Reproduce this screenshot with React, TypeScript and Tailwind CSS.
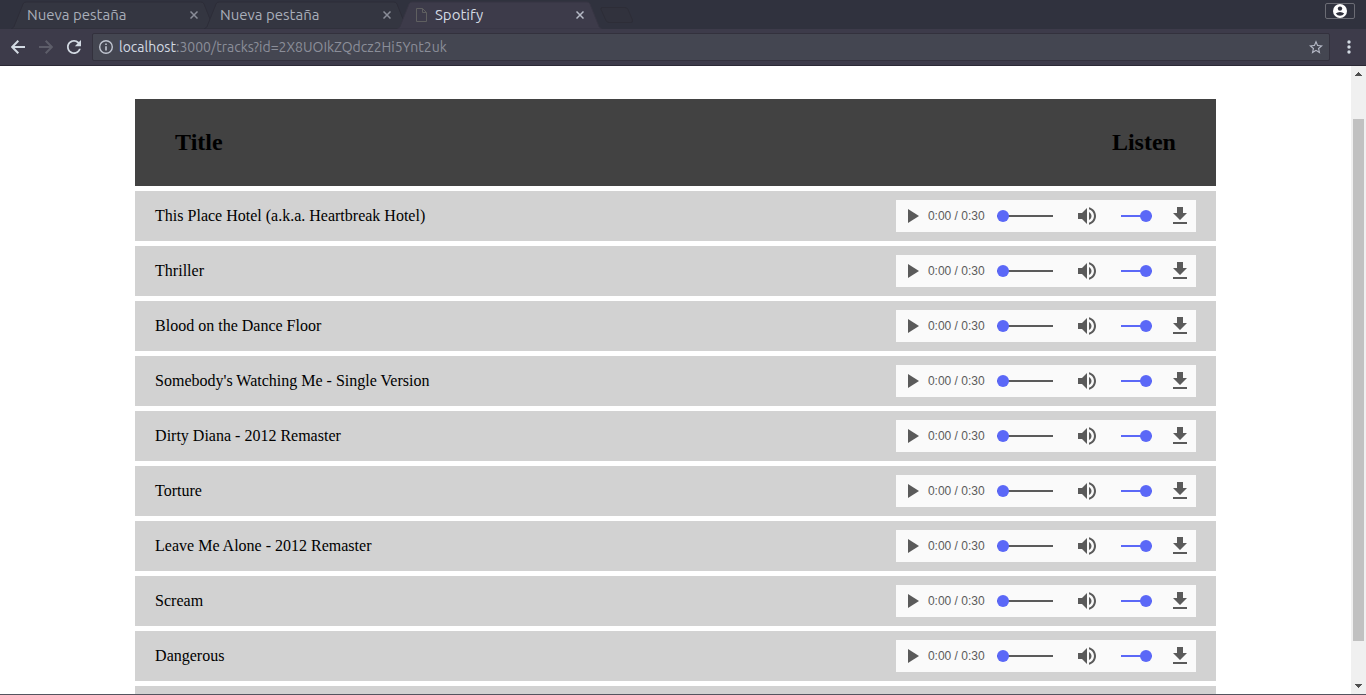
import { ReactNode } from "react";

const tracks = [
  "This Place Hotel (a.k.a. Heartbreak Hotel)",
  "Thriller",
  "Blood on the Dance Floor",
  "Somebody's Watching Me - Single Version",
  "Dirty Diana - 2012 Remaster",
  "Torture",
  "Leave Me Alone - 2012 Remaster",
  "Scream",
  "Dangerous",
];

function Tab({ title, active = false, icon }: { title: string; active?: boolean; icon?: ReactNode }) {
  return (
    <div className={active ? "relative z-10 -mr-3 h-7 w-[205px]" : "relative -mr-3 h-7 w-[205px]"}>
      <svg className="absolute inset-0 h-full w-full" viewBox="0 0 205 28" preserveAspectRatio="none" aria-hidden="true">
        <path
          d="M0.5 28 L3 25.5 L12 3 Q13 1 15 1 H190 Q192 1 193 3 L202 25.5 L204.5 28 Z"
          fill={active ? "#3d3b4a" : "#343641"}
          stroke={active ? "#373543" : "#2d2d38"}
        />
      </svg>
      <div className="relative flex h-full items-center pr-3.5 pl-4">
        {icon}
        <span className={active ? "flex-1 text-[#d3dae3]" : "flex-1 text-[#a9aeb9]"}>{title}</span>
        <button aria-label={`Cerrar ${title}`} className="flex size-4 items-center justify-center">
          <svg width="8" height="8" viewBox="0 0 8 8" stroke={active ? "#b6bac6" : "#8a8d98"} strokeWidth="1.5" aria-hidden="true">
            <path d="M0.5 0.5 7.5 7.5M7.5 0.5 0.5 7.5" />
          </svg>
        </button>
      </div>
    </div>
  );
}

function BrowserChrome() {
  return (
    <header className="shrink-0 font-['Ubuntu','Noto_Sans',sans-serif] text-sm">
      <div className="flex h-[29px] items-end justify-between bg-[#30323e] pr-[11px] text-[15px]">
        <div className="flex pl-[11px]">
          <Tab title="Nueva pestaña" />
          <Tab title="Nueva pestaña" />
          <Tab
            title="Spotify"
            active
            icon={
              <svg className="mr-2 ml-[3px]" width="11" height="14" viewBox="0 0 11 14" fill="none" stroke="#5f5f60" aria-hidden="true">
                <path d="M0.5 0.5H6.5L10.5 4.5V13.5H0.5ZM6.5 0.5V4.5H10.5" />
              </svg>
            }
          />
          <button aria-label="Nueva pestaña" className="ml-2.5 flex items-center">
            <svg width="34" height="16" viewBox="0 0 34 16" aria-hidden="true">
              <path d="M2 0.5H25Q27 0.5 28 2.5L32.5 13Q33 15.5 31 15.5H9Q7 15.5 6 13.5L1 2.5Q0.5 0.5 2 0.5Z" fill="#31323d" stroke="#2d2d37" />
            </svg>
          </button>
        </div>
        <button aria-label="Perfil" className="mb-2.5 flex h-4 w-[30px] items-center justify-center rounded-xs border border-[#6b6c74]">
          <svg width="14" height="14" viewBox="0 0 14 14" aria-hidden="true">
            <circle cx="7" cy="7" r="7" fill="#fff" />
            <circle cx="7" cy="4.6" r="2.2" fill="#30323e" />
            <path d="M2.8 9.6Q4.5 7.9 7 7.9T11.2 9.6Q9.6 11.8 7 11.8T2.8 9.6Z" fill="#30323e" />
          </svg>
        </button>
      </div>
      <div className="flex h-[37px] items-center border-b border-[#2b2935] bg-[#3d3b4a] pr-3.5 pl-1.5">
        <button aria-label="Atrás" className="flex size-6 items-center justify-center">
          <svg width="14" height="14" viewBox="0 0 14 14" fill="none" stroke="#d3dae3" strokeWidth="2" aria-hidden="true">
            <path d="M14 7H1.5M7.3 0.8 1.2 7 7.3 13.2" />
          </svg>
        </button>
        <button aria-label="Adelante" className="ml-1 flex size-6 items-center justify-center">
          <svg width="14" height="14" viewBox="0 0 14 14" fill="none" stroke="#5d5d69" strokeWidth="2" aria-hidden="true">
            <path d="M0 7H12.5M6.7 0.8 12.8 7 6.7 13.2" />
          </svg>
        </button>
        <button aria-label="Recargar" className="ml-1 flex size-6 items-center justify-center">
          <svg width="14" height="14" viewBox="4 4 16 16" fill="#d3dae3" aria-hidden="true">
            <path d="M17.65 6.35C16.2 4.9 14.21 4 12 4c-4.42 0-7.99 3.58-7.99 8s3.57 8 7.99 8c3.73 0 6.84-2.55 7.73-6h-2.08c-.82 2.33-3.04 4-5.65 4-3.31 0-6-2.69-6-6s2.69-6 6-6c1.66 0 3.14.69 4.22 1.78L13 11h7V4l-2.35 2.35z" />
          </svg>
        </button>
        <div className="ml-1.5 flex h-7 flex-1 items-center rounded-xs border border-[#33313d] bg-[#444651] pr-1.5 pl-1.5">
          <svg className="mr-1.5" width="14" height="14" viewBox="0 0 14 14" fill="none" stroke="#c0c5d0" aria-hidden="true">
            <circle cx="7" cy="7" r="6.3" strokeWidth="1.4" />
            <path d="M7 6.2V10.5M7 3.5V5" strokeWidth="1.6" />
          </svg>
          <a href="/tracks?id=2X8UOIkZQdcz2Hi5Ynt2uk" className="flex-1 text-[#8b8e99]">
            <span className="text-[#d3dae3]">localhost</span>:3000/tracks?id=2X8UOIkZQdcz2Hi5Ynt2uk
          </a>
          <button aria-label="Añadir a marcadores">
            <svg width="14" height="14" viewBox="2 2 20 19" fill="#b4b8c5" aria-hidden="true">
              <path d="M22 9.24l-7.19-.62L12 2 9.19 8.63 2 9.24l5.46 4.73L5.82 21 12 17.27 18.18 21l-1.63-7.03L22 9.24zM12 15.4l-3.76 2.27 1-4.28-3.32-2.88 4.38-.38L12 6.1l1.71 4.04 4.38.38-3.32 2.88 1 4.28L12 15.4z" />
            </svg>
          </button>
        </div>
        <button aria-label="Menú" className="ml-4 flex h-6 w-1.5 items-center justify-center">
          <svg width="4" height="14" viewBox="0 0 4 14" fill="#d3dae3" aria-hidden="true">
            <circle cx="2" cy="2" r="1.7" />
            <circle cx="2" cy="7" r="1.7" />
            <circle cx="2" cy="12" r="1.7" />
          </svg>
        </button>
      </div>
    </header>
  );
}

function PlayerButton({ label, path, className = "" }: { label: string; path: string; className?: string }) {
  return (
    <button aria-label={label} className={className}>
      <svg className="block size-6" viewBox="0 0 24 24" fill="#5a5a5a" aria-hidden="true">
        <path d={path} />
      </svg>
    </button>
  );
}

const thumb =
  "block h-3 shrink-0 appearance-none bg-linear-to-r bg-size-[100%_2px] bg-center bg-no-repeat [&::-webkit-slider-thumb]:size-3 [&::-webkit-slider-thumb]:appearance-none [&::-webkit-slider-thumb]:rounded-full [&::-webkit-slider-thumb]:bg-[#5b68f7]";

function Player({ title }: { title: string }) {
  return (
    <div className="ml-auto flex h-8 w-[300px] items-center bg-[#fafafa] px-1">
      <PlayerButton label={`Reproducir ${title}`} path="M8 5v14l11-7z" className="mr-1" />
      <span className="w-[57px] whitespace-nowrap font-['Liberation_Sans',sans-serif] text-xs text-[#5a5a5a]">0:00 / 0:30</span>
      <input type="range" aria-label={`Posición de ${title}`} min={0} max={30} defaultValue={0} className={`${thumb} ml-3 w-14 from-[#5a5a5a] to-[#5a5a5a]`} />
      <PlayerButton
        label={`Silenciar ${title}`}
        className="mx-[22px]"
        path="M3 9v6h4l5 5V4L7 9H3zm13.5 3c0-1.77-1.02-3.29-2.5-4.03v8.05c1.48-.73 2.5-2.25 2.5-4.02zM14 3.23v2.06c2.89.86 5 3.54 5 6.71s-2.11 5.85-5 6.71v2.06c4.01-.91 7-4.49 7-8.77s-2.99-7.86-7-8.77z"
      />
      <input type="range" aria-label={`Volumen de ${title}`} min={0} max={100} defaultValue={100} className={`${thumb} mr-4 w-[31px] from-[#5b68f7] to-[#5b68f7]`} />
      <PlayerButton label={`Descargar ${title}`} path="M19 9h-4V3H9v6H5l7 7 7-7zM5 18v2h14v-2H5z" />
    </div>
  );
}

function ScrollBar() {
  return (
    <div className="flex w-[15px] shrink-0 flex-col items-center bg-[#f0f0f0] py-1.5" aria-hidden="true">
      <svg className="shrink-0" width="7" height="4" viewBox="0 0 7 4" fill="#505050">
        <path d="M3 0h1v1h1v1h1v1h1v1H0V3h1V2h1V1h1z" />
      </svg>
      <div className="grow-[43]" />
      <div className="w-[11px] grow-[522] bg-[#c1c1c1]" />
      <div className="grow-[43]" />
      <svg className="shrink-0" width="7" height="4" viewBox="0 0 7 4" fill="#505050">
        <path d="M3 4h1V3h1V2h1V1h1V0H0v1h1v1h1v1h1z" />
      </svg>
    </div>
  );
}

export default function App() {
  return (
    <div className="flex h-screen flex-col overflow-hidden border-b border-[#55545f] bg-white">
      <BrowserChrome />
      <div className="flex min-h-0 flex-1">
        <main className="min-w-0 flex-1 overflow-hidden pt-7 font-['Liberation_Serif',serif] text-base text-black">
          <table className="mx-auto w-4/5 border-separate border-spacing-x-0 border-spacing-y-[5px]">
            <thead>
              <tr className="h-[87px] bg-[#424242] text-2xl">
                <th className="px-10 pt-0 pb-0.5 text-left font-bold">Title</th>
                <th className="px-10 pt-0 pb-0.5 text-right font-bold">Listen</th>
              </tr>
            </thead>
            <tbody>
              {tracks.map((title) => (
                <tr key={title} className="h-[50px] bg-[#d2d2d2]">
                  <td className="p-0 pl-5">{title}</td>
                  <td className="p-0 pr-5">
                    <Player title={title} />
                  </td>
                </tr>
              ))}
              <tr className="h-[50px] bg-[#d2d2d2]">
                <td colSpan={2} />
              </tr>
            </tbody>
          </table>
        </main>
        <ScrollBar />
      </div>
    </div>
  );
}
